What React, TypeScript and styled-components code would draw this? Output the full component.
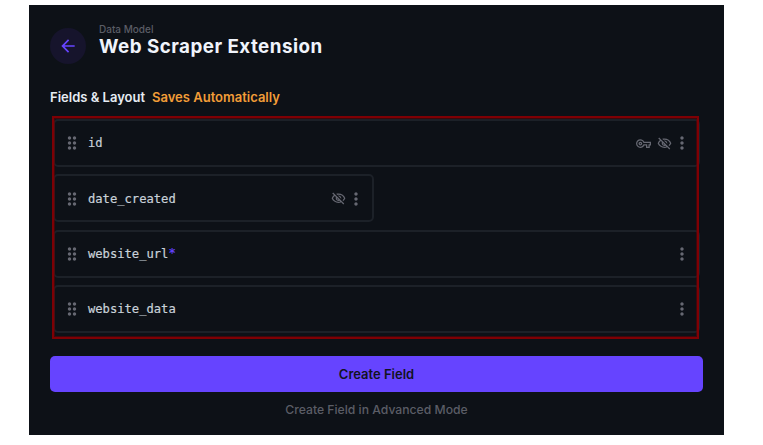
import React from "react";
import styled, { createGlobalStyle } from "styled-components";
import {
  MdArrowBack,
  MdDragIndicator,
  MdMoreVert,
  MdOutlineVisibilityOff,
  MdOutlineVpnKey,
} from "react-icons/md";

const GlobalStyle = createGlobalStyle`
  * { box-sizing: border-box; }
  body { margin: 0; background: #fff; font-family: Inter, sans-serif; }
`;

const Panel = styled.main`
  width: 694.5px;
  height: 430.4px;
  margin: 5px 0 0 29px;
  padding: 18px 20.5px 0 21px;
  background: #0d1117;
`;

const Header = styled.header`
  display: flex;
  gap: 13px;
  height: 66px;
`;

const BackButton = styled.button`
  display: grid;
  place-items: center;
  width: 36px;
  height: 36px;
  margin-top: 5px;
  padding: 0;
  border: 0;
  border-radius: 50%;
  background: #16142c;
  color: #6644ff;
  font-size: 20px;
`;

const Overline = styled.div`
  color: #5b5d66;
  font-size: 10px;
  font-weight: 500;
  line-height: 13px;
`;

const Title = styled.h1`
  margin: 0;
  color: #f0f4fb;
  font-size: 18.8px;
  font-weight: 700;
  letter-spacing: 0.47px;
  line-height: 21px;
  white-space: nowrap;
`;

const SectionLabel = styled.div`
  display: flex;
  gap: 7px;
  height: 30px;
  color: #e6ecf3;
  font-size: 13px;
  font-weight: 600;
  line-height: 17px;
`;

const Hint = styled.span`
  color: #f29d38;
`;

const FieldArea = styled.section`
  position: relative;
  display: flex;
  flex-direction: column;
  gap: 7.4px;
  height: 237.4px;
  padding: 0 3px;
`;

/* Red frame drawn over the field list. */
const Highlight = styled.div`
  position: absolute;
  top: -3.4px;
  left: 2px;
  width: 647px;
  height: 223.4px;
  border: 2px solid #7e0004;
  box-shadow: inset 0 0 0 1px rgba(110, 0, 3, 0.5);
  pointer-events: none;
`;

const FieldRow = styled.div<{ $half?: boolean }>`
  display: flex;
  align-items: center;
  flex: none;
  width: ${(p) => (p.$half ? "320.5px" : "100%")};
  height: 48px;
  padding: 0.5px 6px 0 6.8px;
  border: 2px solid #1c2128;
  border-radius: 5px;
  color: #666872;
`;

const Grip = styled(MdDragIndicator)`
  flex: none;
  width: 20px;
  height: 20px;
  margin-right: 6.2px;
`;

const FieldName = styled.span`
  flex: 1;
  color: #c9d1d9;
  font-family: "DejaVu Sans Mono", monospace;
  font-size: 12.15px;
  -webkit-text-stroke: 0.2px currentColor;
`;

const Required = styled.sup`
  color: #6644ff;
  font-size: inherit;
  line-height: 0;
  vertical-align: 1px;
`;

const Icons = styled.span`
  display: flex;
  align-items: center;
  font-size: 15px;
`;

const KeyIcon = styled(MdOutlineVpnKey)`
  margin-right: 6px;
`;

const MoreIcon = styled(MdMoreVert)`
  width: 20px;
  height: 20px;
`;

const CreateButton = styled.button`
  display: block;
  width: 100%;
  height: 35.6px;
  padding: 0;
  border: 0;
  border-radius: 5px;
  background: #6644ff;
  color: #12131f;
  font: 600 13px/36px Inter, sans-serif;
`;

const AdvancedLink = styled.a`
  display: block;
  margin-top: 9px;
  color: #5b5d66;
  font-size: 12.2px;
  font-weight: 500;
  line-height: 17px;
  text-align: center;
`;

type Field = { name: string; half?: boolean; primary?: boolean; hidden?: boolean; required?: boolean };

const fields: Field[] = [
  { name: "id", primary: true, hidden: true },
  { name: "date_created", half: true, hidden: true },
  { name: "website_url", required: true },
  { name: "website_data" },
];

export default function App() {
  return (
    <>
      <GlobalStyle />
      <Panel>
        <Header>
          <BackButton aria-label="Back">
            <MdArrowBack />
          </BackButton>
          <div>
            <Overline>Data Model</Overline>
            <Title>Web Scraper Extension</Title>
          </div>
        </Header>
        <SectionLabel>
          <span>Fields &amp; Layout</span>
          <Hint>Saves Automatically</Hint>
        </SectionLabel>
        <FieldArea>
          {fields.map((f) => (
            <FieldRow key={f.name} $half={f.half}>
              <Grip />
              <FieldName>
                {f.name}
                {f.required && <Required>*</Required>}
              </FieldName>
              <Icons>
                {f.primary && <KeyIcon />}
                {f.hidden && <MdOutlineVisibilityOff />}
                <MoreIcon />
              </Icons>
            </FieldRow>
          ))}
          <Highlight />
        </FieldArea>
        <CreateButton>Create Field</CreateButton>
        <AdvancedLink>Create Field in Advanced Mode</AdvancedLink>
      </Panel>
    </>
  );
}
